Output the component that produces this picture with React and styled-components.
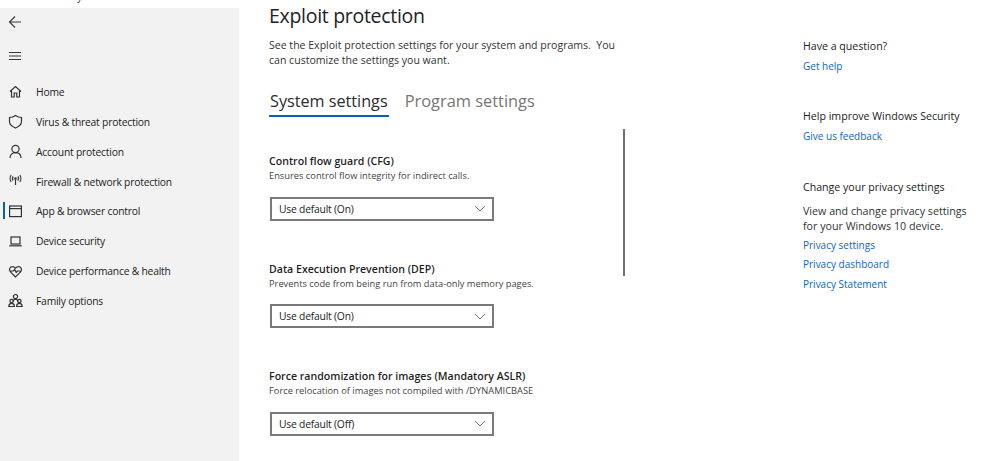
import styled, { createGlobalStyle } from "styled-components";

const GlobalStyle = createGlobalStyle`
	html, body {
		margin: 0;
		padding: 0;
		background: #fff;
	}
	body {
		font-family: "Open Sans", "Noto Sans", sans-serif;
		color: #1f1f1f;
	}
`;

const Page = styled.div`
	display: flex;
	width: 1000px;
	height: 461px;
	overflow: hidden;
	background: #fff;
`;

const SideColumn = styled.div`
	width: 239px;
	flex-shrink: 0;
	display: flex;
	flex-direction: column;
`;

const CutTitle = styled.div`
	height: 8px;
	overflow: hidden;
	font-size: 10px;
	line-height: 14px;
	color: #333;

	span {
		display: block;
		margin-top: -11px;
	}
`;

const Sidebar = styled.nav`
	flex: 1;
	background: #f2f2f2;
	display: flex;
	flex-direction: column;
`;

const TopIcon = styled.div`
	height: ${(p) => p.$h}px;
	display: flex;
	align-items: center;
	padding-left: 8px;
	color: #3a3a3a;
`;

const NavList = styled.div`
	display: flex;
	flex-direction: column;
	margin-top: 1px;
`;

const NavRow = styled.div`
	position: relative;
	height: 29.86px;
	display: flex;
	align-items: center;
	gap: 12px;
	padding-left: 7px;
	font-size: 10.3px;
	letter-spacing: -0.2px;
	color: #222;

	&::before {
		content: "";
		display: ${(p) => (p.$active ? "block" : "none")};
		position: absolute;
		left: 3px;
		top: 6px;
		width: 2px;
		height: 17px;
		background: #0a5fb4;
	}
`;

const NavIcon = styled.svg`
	width: 17px;
	height: 17px;
	flex-shrink: 0;
	fill: none;
	stroke: #333;
	stroke-width: 1.2;
`;

const Main = styled.main`
	position: relative;
	width: 564px;
	flex-shrink: 0;
	padding: 3px 0 0 30px;
	box-sizing: border-box;
`;

const Title = styled.h1`
	margin: 0;
	font-size: 19.5px;
	font-weight: 400;
	letter-spacing: -0.3px;
	line-height: 26px;
	color: #222;
`;

const Intro = styled.p`
	margin: 9px 0 0;
	width: 360px;
	font-size: 10.55px;
	line-height: 15px;
	color: #333;
`;

const Tabs = styled.div`
	display: flex;
	gap: 15px;
	margin-top: 21px;
`;

const Tab = styled.div`
	font-size: ${(p) => (p.$active ? "16.2px" : "16.4px")};
	line-height: 24px;
	height: 26px;
	padding: 0 1px;
	color: ${(p) => (p.$active ? "#2b2b2b" : "#767676")};
	border-bottom: 2px solid ${(p) => (p.$active ? "#0a5fb4" : "transparent")};
`;

const Settings = styled.div`
	display: flex;
	flex-direction: column;
	gap: 40px;
	margin-top: 36px;
`;

const Setting = styled.section`
	display: flex;
	flex-direction: column;
`;

const SettingName = styled.h3`
	margin: 0;
	font-size: 10.6px;
	font-weight: 600;
	line-height: 16px;
	color: #1f1f1f;
`;

const SettingHint = styled.p`
	margin: 0 0 13.5px;
	font-size: 9.3px;
	line-height: 14px;
	color: #444;
`;

const Select = styled.div`
	width: 224px;
	height: 24px;
	margin-left: 1px;
	box-sizing: border-box;
	border: 2px solid #7a7a7a;
	display: flex;
	align-items: center;
	justify-content: space-between;
	padding: 0 6px 0 7px;
	font-size: 10.3px;
	letter-spacing: -0.2px;
	color: #222;
`;

const Scrollbar = styled.div`
	position: absolute;
	left: 384px;
	top: 129px;
	width: 2px;
	height: 147px;
	background: #6e6e6e;
`;

const Aside = styled.aside`
	padding-top: 38px;
	display: flex;
	flex-direction: column;
	gap: 34.25px;
`;

const AsideBlock = styled.div`
	display: flex;
	flex-direction: column;
`;

const AsideHead = styled.h4`
	margin: 0 0 5px;
	font-size: 10.6px;
	font-weight: 400;
	line-height: 16px;
	color: #222;
`;

const AsideText = styled.p`
	margin: 4px 0 4px;
	width: 180px;
	font-size: 10.7px;
	line-height: 15px;
	color: #333;
`;

const HelpLink = styled.a`
	font-size: 10px;
	line-height: 15px;
	color: #0a66c2;
	margin-bottom: ${(p) => (p.$spaced ? "4.5px" : "0")};
`;

const navItems = [
	{
		label: "Home",
		icon: <path d="M3 8.5 8.5 3.5 14 8.5M4.5 7.5V14H7.2V10H9.8V14H12.5V7.5" />,
	},
	{
		label: "Virus & threat protection",
		icon: <path d="M8.5 2.5C10.5 4 12.5 4.5 14.5 4.5V8.5C14.5 11.5 12 13.5 8.5 15 5 13.5 2.5 11.5 2.5 8.5V4.5C4.5 4.5 6.5 4 8.5 2.5Z" />,
	},
	{
		label: "Account protection",
		icon: (
			<>
				<circle cx="8.5" cy="6" r="3.6" />
				<path d="M3 15C3 11.8 5.2 9.6 8.5 9.6S14 11.8 14 15" />
			</>
		),
	},
	{
		label: "Firewall & network protection",
		icon: (
			<>
				<circle cx="8.5" cy="5.5" r="0.7" />
				<path d="M8.5 6.5V12M6.2 3.5C5.3 4.6 5.3 6.4 6.2 7.5M10.8 3.5C11.7 4.6 11.7 6.4 10.8 7.5M4.2 2.2C2.8 4 2.8 7 4.2 8.8M12.8 2.2C14.2 4 14.2 7 12.8 8.8" />
			</>
		),
	},
	{
		label: "App & browser control",
		active: true,
		icon: (
			<>
				<rect x="2.6" y="3" width="11.8" height="10.6" />
				<path d="M2.6 5.6H14.4" />
			</>
		),
	},
	{
		label: "Device security",
		icon: (
			<>
				<rect x="4" y="4" width="9" height="7" />
				<path d="M2.2 12.8H14.8" />
			</>
		),
	},
	{
		label: "Device performance & health",
		icon: <path d="M8.5 14 3.2 8.6C1.6 6.8 2.8 3.6 5.4 3.6 6.8 3.6 7.8 4.3 8.5 5.2 9.2 4.3 10.2 3.6 11.6 3.6 14.2 3.6 15.4 6.8 13.8 8.6L8.5 14ZM2.6 8H6.4L7.6 6.4 9.2 9.4 10.4 8H14.4" />,
	},
	{
		label: "Family options",
		icon: (
			<>
				<circle cx="8.5" cy="4.6" r="2.1" />
				<circle cx="4.6" cy="9" r="1.7" />
				<circle cx="12.4" cy="9" r="1.7" />
				<path d="M1.8 14.5C1.8 12.5 3 11.4 4.6 11.4S7.4 12.5 7.4 14.5H1.8ZM9.6 14.5C9.6 12.5 10.8 11.4 12.4 11.4S15.2 12.5 15.2 14.5H9.6ZM6 9.5C6.5 8 7.4 7.2 8.5 7.2S10.5 8 11 9.5" />
			</>
		),
	},
];

const settings = [
	{
		name: "Control flow guard (CFG)",
		hint: "Ensures control flow integrity for indirect calls.",
		value: "Use default (On)",
	},
	{
		name: "Data Execution Prevention (DEP)",
		hint: "Prevents code from being run from data-only memory pages.",
		value: "Use default (On)",
	},
	{
		name: "Force randomization for images (Mandatory ASLR)",
		hint: "Force relocation of images not compiled with /DYNAMICBASE",
		value: "Use default (Off)",
	},
];

function Chevron() {
	return (
		<svg width="12" height="7" viewBox="0 0 12 7" fill="none" stroke="#777" strokeWidth="1">
			<path d="M1 1 6 6 11 1" />
		</svg>
	);
}

export default function App() {
	return (
		<Page>
			<GlobalStyle />
			<SideColumn>
				<CutTitle><span>Windows Security</span></CutTitle>
				<Sidebar>
					<TopIcon $h={28}>
						<svg width="14" height="14" viewBox="0 0 14 14" fill="none" stroke="#3a3a3a" strokeWidth="1.1">
							<path d="M13 7H1.5M7 1.5 1.5 7 7 12.5" />
						</svg>
					</TopIcon>
					<TopIcon $h={40}>
						<svg width="14" height="10" viewBox="0 0 14 10" fill="none" stroke="#3a3a3a" strokeWidth="1.2">
							<path d="M1 1.5H13M1 5H13M1 8.5H13" />
						</svg>
					</TopIcon>
					<NavList>
						{
							navItems.map((item) => {
								return (
									<NavRow key={item.label} $active={item.active}>
										<NavIcon viewBox="0 0 17 17">{item.icon}</NavIcon>
										{item.label}
									</NavRow>
								)
							})
						}
					</NavList>
				</Sidebar>
			</SideColumn>
			<Main>
				<Title>Exploit protection</Title>
				<Intro>See the Exploit protection settings for your system and programs.&nbsp; You can customize the settings you want.</Intro>
				<Tabs>
					<Tab $active>System settings</Tab>
					<Tab>Program settings</Tab>
				</Tabs>
				<Settings>
					{
						settings.map((item) => {
							return (
								<Setting key={item.name}>
									<SettingName>{item.name}</SettingName>
									<SettingHint>{item.hint}</SettingHint>
									<Select>
										{item.value}
										<Chevron />
									</Select>
								</Setting>
							)
						})
					}
				</Settings>
				<Scrollbar />
			</Main>
			<Aside>
				<AsideBlock>
					<AsideHead>Have a question?</AsideHead>
					<HelpLink>Get help</HelpLink>
				</AsideBlock>
				<AsideBlock>
					<AsideHead>Help improve Windows Security</AsideHead>
					<HelpLink>Give us feedback</HelpLink>
				</AsideBlock>
				<AsideBlock>
					<AsideHead>Change your privacy settings</AsideHead>
					<AsideText>View and change privacy settings for your Windows 10 device.</AsideText>
					<HelpLink $spaced>Privacy settings</HelpLink>
					<HelpLink $spaced>Privacy dashboard</HelpLink>
					<HelpLink $spaced>Privacy Statement</HelpLink>
				</AsideBlock>
			</Aside>
		</Page>
	)
}
